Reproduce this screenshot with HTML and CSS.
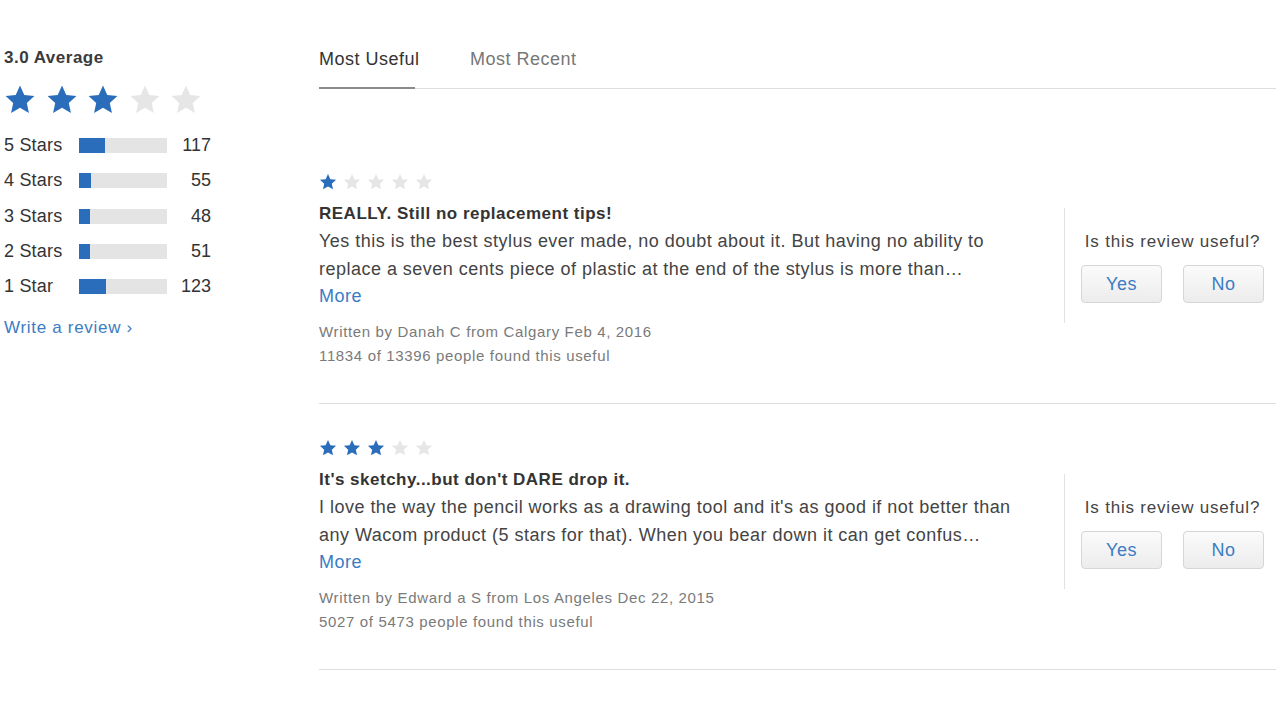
FILE: index.html
```html
<!DOCTYPE html>
<html>
<head>
<meta charset="utf-8">
<link rel="stylesheet" href="styles.css">
</head>
<body>
<svg width="0" height="0" class="defs">
  <defs>
    <symbol id="star" viewBox="0 0 24 24"><polygon points="12,1.2 15.2,8.2 22.8,9 17.1,14.2 18.7,21.8 12,17.9 5.3,21.8 6.9,14.2 1.2,9 8.8,8.2"/></symbol>
  </defs>
</svg>
<div class="page">
  <aside class="summary">
    <div class="avg">3.0 Average</div>
    <div class="big-stars">
      <svg class="on"><use href="#star"/></svg>
      <svg class="on"><use href="#star"/></svg>
      <svg class="on"><use href="#star"/></svg>
      <svg class="off"><use href="#star"/></svg>
      <svg class="off"><use href="#star"/></svg>
    </div>
    <div class="hist">
      <div class="hrow"><span class="hlabel">5 Stars</span><span class="bar"><span class="fill" style="width:26px"></span></span><span class="count">117</span></div>
      <div class="hrow"><span class="hlabel">4 Stars</span><span class="bar"><span class="fill" style="width:12px"></span></span><span class="count">55</span></div>
      <div class="hrow"><span class="hlabel">3 Stars</span><span class="bar"><span class="fill" style="width:11px"></span></span><span class="count">48</span></div>
      <div class="hrow"><span class="hlabel">2 Stars</span><span class="bar"><span class="fill" style="width:11px"></span></span><span class="count">51</span></div>
      <div class="hrow"><span class="hlabel">1 Star</span><span class="bar"><span class="fill" style="width:27px"></span></span><span class="count">123</span></div>
    </div>
    <a class="write" href="#">Write a review ›</a>
  </aside>
  <main class="reviews">
    <nav class="tabs">
      <span class="tab active">Most Useful</span>
      <span class="tab">Most Recent</span>
    </nav>
    <div class="list">
      <article class="review">
        <div class="small-stars">
          <svg class="on"><use href="#star"/></svg>
          <svg class="off"><use href="#star"/></svg>
          <svg class="off"><use href="#star"/></svg>
          <svg class="off"><use href="#star"/></svg>
          <svg class="off"><use href="#star"/></svg>
        </div>
        <div class="review-row">
          <div class="review-main">
            <h3 class="title">REALLY. Still no replacement tips!</h3>
            <p class="text">Yes this is the best stylus ever made, no doubt about it. But having no ability to<br>replace a seven cents piece of plastic at the end of the stylus is more than…</p>
            <a class="more" href="#">More</a>
            <div class="meta">Written by Danah C from Calgary Feb 4, 2016<br>11834 of 13396 people found this useful</div>
          </div>
          <div class="useful">
            <div class="q">Is this review useful?</div>
            <div class="btns"><button class="btn">Yes</button><button class="btn">No</button></div>
          </div>
        </div>
      </article>
      <article class="review">
        <div class="small-stars">
          <svg class="on"><use href="#star"/></svg>
          <svg class="on"><use href="#star"/></svg>
          <svg class="on"><use href="#star"/></svg>
          <svg class="off"><use href="#star"/></svg>
          <svg class="off"><use href="#star"/></svg>
        </div>
        <div class="review-row">
          <div class="review-main">
            <h3 class="title">It's sketchy...but don't DARE drop it.</h3>
            <p class="text">I love the way the pencil works as a drawing tool and it's as good if not better than<br>any Wacom product (5 stars for that). When you bear down it can get confus…</p>
            <a class="more" href="#">More</a>
            <div class="meta">Written by Edward a S from Los Angeles Dec 22, 2015<br>5027 of 5473 people found this useful</div>
          </div>
          <div class="useful">
            <div class="q">Is this review useful?</div>
            <div class="btns"><button class="btn">Yes</button><button class="btn">No</button></div>
          </div>
        </div>
      </article>
    </div>
  </main>
</div>
</body>
</html>
```
FILE: styles.css
```css
html, body {
  margin: 0;
  padding: 0;
  background: #ffffff;
}
body {
  font-family: "Liberation Sans", Arial, sans-serif;
  color: #333333;
  width: 1280px;
  height: 720px;
  overflow: hidden;
}
.defs {
  position: absolute;
  width: 0;
  height: 0;
}
.page {
  display: flex;
  align-items: flex-start;
}
.summary {
  width: 319px;
  flex: none;
  padding: 47px 0 0 4px;
  box-sizing: border-box;
}
.avg {
  font-size: 17px;
  font-weight: bold;
  line-height: 22px;
  letter-spacing: 0.5px;
  color: #3a3a3a;
}
.big-stars {
  display: flex;
  gap: 9.5px;
  margin-top: 15px;
  height: 32px;
}
.big-stars svg {
  width: 32px;
  height: 32px;
}
.on { fill: #2a6dbb; }
.off { fill: #e6e6e6; }
.hist {
  margin-top: 12px;
}
.hrow {
  display: flex;
  align-items: center;
  height: 35.3px;
  font-size: 18px;
  color: #333;
}
.hlabel {
  width: 75px;
  letter-spacing: 0.2px;
}
.bar {
  width: 88px;
  height: 15px;
  background: #e4e4e4;
  display: flex;
}
.fill {
  background: #2a6dbb;
  height: 100%;
}
.count {
  width: 44px;
  text-align: right;
}
.write {
  display: block;
  margin-top: 14px;
  font-size: 17px;
  line-height: 20px;
  letter-spacing: 0.7px;
  color: #3b7cc4;
  text-decoration: none;
}
.reviews {
  width: 957px;
  flex: none;
}
.tabs {
  display: flex;
  gap: 55px;
  padding-top: 48px;
  border-bottom: 1px solid #dddddd;
  height: 40px;
  box-sizing: content-box;
}
.tab {
  font-size: 18px;
  line-height: 22px;
  letter-spacing: 0.5px;
  color: #777;
  height: 40px;
  white-space: nowrap;
  box-sizing: border-box;
}
.tab.active {
  color: #333;
  border-bottom: 2px solid #8a8a8a;
  width: 96px;
  flex: none;
  margin-bottom: -1px;
  height: 41px;
}
.list {
  margin-top: 50px;
}
.review {
  padding: 33px 0 35px;
  border-bottom: 1px solid #dddddd;
}
.review + .review {
  padding-top: 34px;
}
.small-stars {
  display: flex;
  gap: 6px;
  height: 20px;
  align-items: center;
}
.small-stars svg {
  width: 18px;
  height: 18px;
}
.review-row {
  display: flex;
  justify-content: space-between;
  margin-top: 12px;
}
.title {
  margin: 0 0 4px;
  font-size: 17px;
  font-weight: bold;
  line-height: 20px;
  letter-spacing: 0.5px;
  color: #333;
}
.text {
  margin: 0;
  font-size: 18px;
  line-height: 27.5px;
  letter-spacing: 0.48px;
  color: #444;
}
.more {
  display: block;
  font-size: 18px;
  line-height: 27.5px;
  letter-spacing: 0.5px;
  color: #3b7cc4;
  text-decoration: none;
}
.meta {
  margin-top: 9.5px;
  font-size: 15px;
  line-height: 24px;
  letter-spacing: 0.65px;
  color: #7a7a7a;
}
.useful {
  width: 212px;
  height: 115px;
  margin-top: 4px;
  border-left: 1px solid #e2e2e2;
  padding: 23px 0 0 16px;
  box-sizing: border-box;
}
.q {
  font-size: 17px;
  line-height: 22px;
  letter-spacing: 0.8px;
  color: #444;
  text-align: center;
  width: 183px;
  white-space: nowrap;
}
.btns {
  display: flex;
  gap: 21px;
  margin-top: 12px;
}
.btn {
  width: 81px;
  height: 38px;
  border: 1px solid #d6d6d6;
  border-radius: 4px;
  background: linear-gradient(#fbfbfb, #ececec);
  font-family: "Liberation Sans", Arial, sans-serif;
  font-size: 18px;
  letter-spacing: 0.5px;
  color: #3b7cc4;
  padding: 0;
}
```
